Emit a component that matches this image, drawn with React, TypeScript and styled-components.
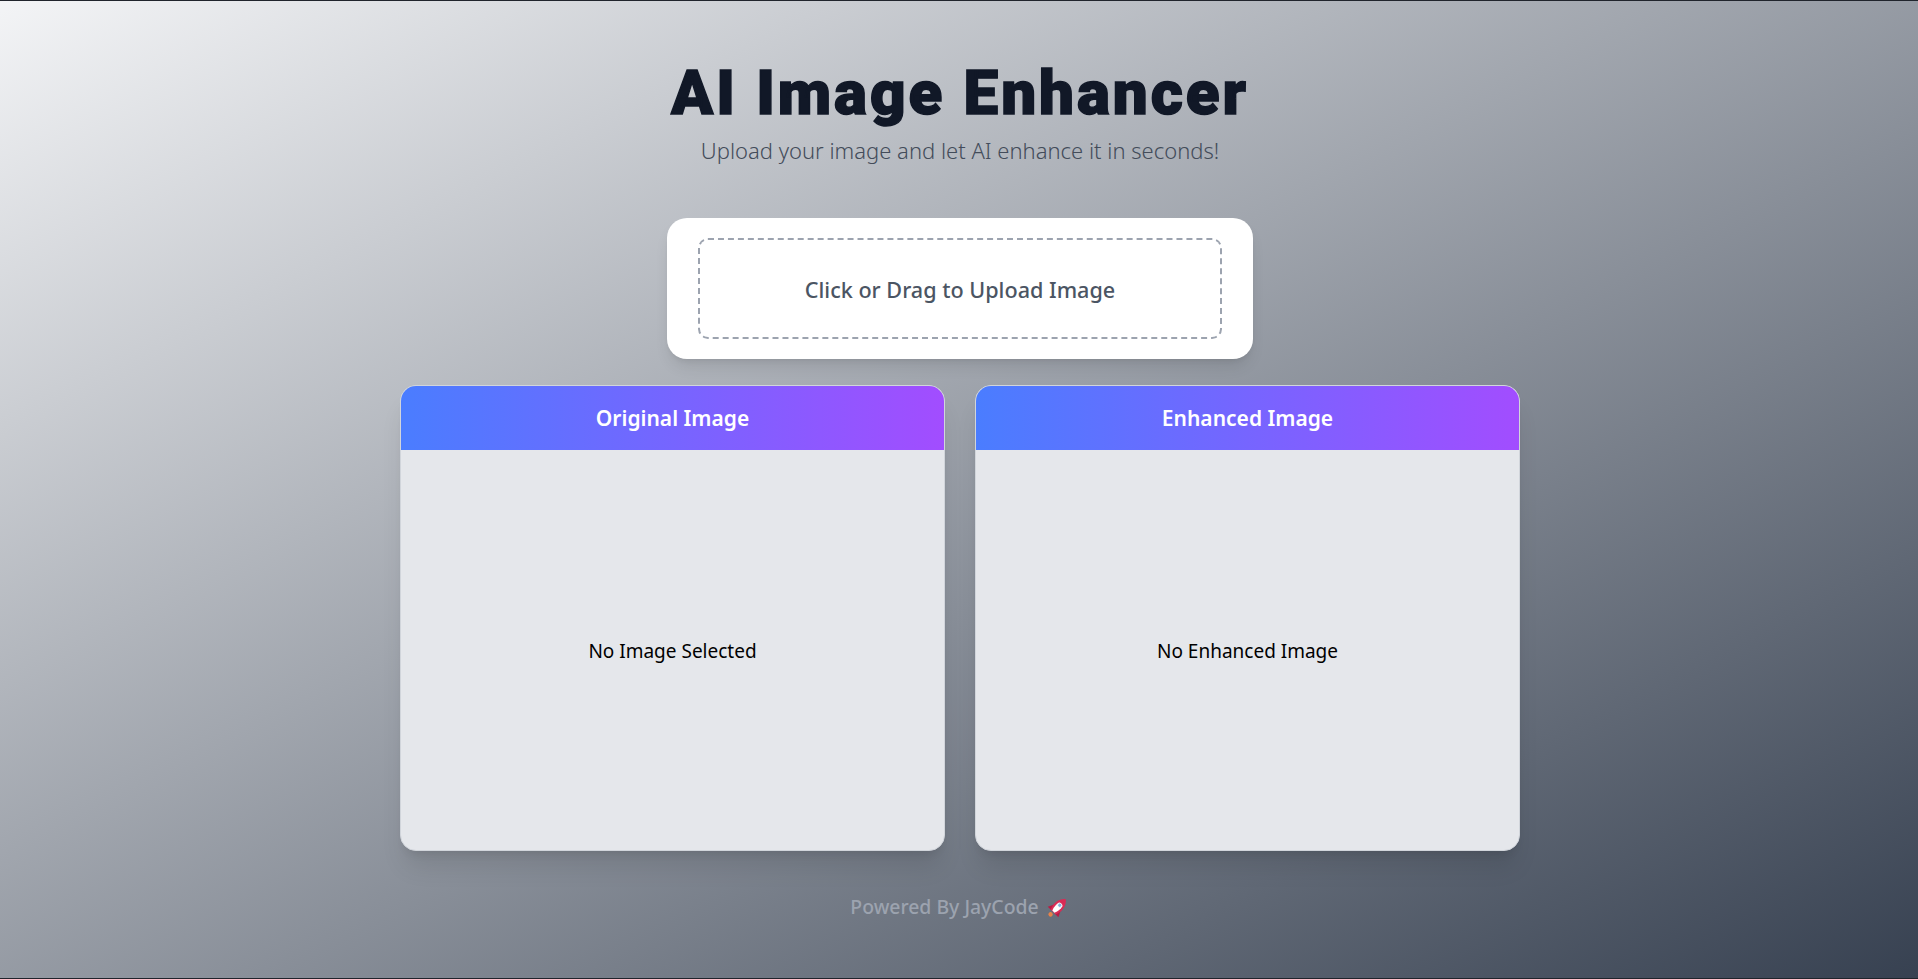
import styled, { createGlobalStyle } from "styled-components";

const GlobalStyle = createGlobalStyle`
  html, body {
    margin: 0;
    padding: 0;
  }

  body {
    font-family: "Noto Sans", "Open Sans", sans-serif;
  }
`;

const Page = styled.div`
  box-sizing: border-box;
  height: 979px;
  overflow: hidden;
  border-top: 1px solid #20242c;
  border-bottom: 1px solid #20242c;
  background: linear-gradient(to bottom right, #f3f4f6, #374151);
  display: flex;
  flex-direction: column;
  align-items: center;
  padding: 51px 0 0 2px;
`;

const Title = styled.h1`
  margin: 0;
  font-family: Roboto, "Noto Sans", sans-serif;
  font-size: 62px;
  line-height: 82px;
  font-weight: 900;
  letter-spacing: 2.9px;
  -webkit-text-stroke: 1.4px #111827;
  color: #111827;
`;

const Subtitle = styled.p`
  margin: 0;
  font-size: 22px;
  line-height: 32px;
  font-weight: 300;
  color: #434c5a;
`;

const UploadCard = styled.div`
  box-sizing: border-box;
  width: 586px;
  height: 141px;
  margin-top: 52px;
  padding: 20px 31px;
  background: #fff;
  border-radius: 20px;
  box-shadow: 0 10px 15px -3px rgba(0, 0, 0, 0.1), 0 4px 6px -4px rgba(0, 0, 0, 0.1);
`;

const DropZone = styled.label`
  box-sizing: border-box;
  height: 100%;
  padding-top: 1px;
  display: flex;
  align-items: center;
  justify-content: center;
  border: 2px dashed #9ca3af;
  border-radius: 10px;
  font-size: 21.6px;
  font-weight: 500;
  color: #4b5563;
`;

const Panels = styled.div`
  display: flex;
  gap: 30px;
  margin-top: 26px;
`;

const Panel = styled.section`
  box-sizing: border-box;
  width: 545px;
  height: 466px;
  display: flex;
  flex-direction: column;
  overflow: hidden;
  background: #e5e7eb;
  border: 1px solid #d1d5db;
  border-radius: 16px;
  box-shadow: 0 20px 25px -5px rgba(0, 0, 0, 0.1), 0 8px 10px -6px rgba(0, 0, 0, 0.1);
`;

const PanelHeader = styled.h2`
  margin: 0;
  height: 64px;
  flex: none;
  display: flex;
  align-items: center;
  justify-content: center;
  background: linear-gradient(to right, #4a7dff, #a24dff);
  font-size: 21px;
  font-weight: 600;
  color: #fff;
`;

const PanelBody = styled.div`
  flex: 1;
  padding-top: 2px;
  display: flex;
  align-items: center;
  justify-content: center;
  font-size: 19px;
  color: #000;
`;

const Footer = styled.footer`
  display: flex;
  align-items: center;
  gap: 7px;
  margin-top: 42px;
  font-size: 19.4px;
  font-weight: 500;
  line-height: 28px;
  color: #9ca3af;
`;

const Rocket = () => (
  <svg width="24" height="24" viewBox="0 0 24 24" aria-hidden="true">
    <g transform="rotate(45 12 12)">
      <circle cx="12" cy="22.500" r="2.200" fill="#e8824a" />
      <path d="M7.500 13 4.500 19h5zM16.500 13l3 6h-5z" fill="#b81c45" />
      <path d="M12 1c4 3 5.500 8 5 13l-1.500 5h-7L7 14C6.500 9 8 4 12 1z" fill="#d92b55" />
      <path d="M9.500 8h5c.8 3.500.6 7-1 10.500h-3c-1.600-3.500-1.800-7-1-10.500z" fill="#fff" />
      <circle cx="12" cy="9.500" r="2.100" fill="#7fb2dc" stroke="#fff" strokeWidth="0.800" />
    </g>
  </svg>
);

export default function App() {
  return (
    <>
      <GlobalStyle />
      <Page>
        <Title>AI Image Enhancer</Title>
        <Subtitle>Upload your image and let AI enhance it in seconds!</Subtitle>
        <UploadCard>
          <DropZone>Click or Drag to Upload Image</DropZone>
        </UploadCard>
        <Panels>
          <Panel>
            <PanelHeader>Original Image</PanelHeader>
            <PanelBody>No Image Selected</PanelBody>
          </Panel>
          <Panel>
            <PanelHeader>Enhanced Image</PanelHeader>
            <PanelBody>No Enhanced Image</PanelBody>
          </Panel>
        </Panels>
        <Footer>
          Powered By JayCode
          <Rocket />
        </Footer>
      </Page>
    </>
  );
}
